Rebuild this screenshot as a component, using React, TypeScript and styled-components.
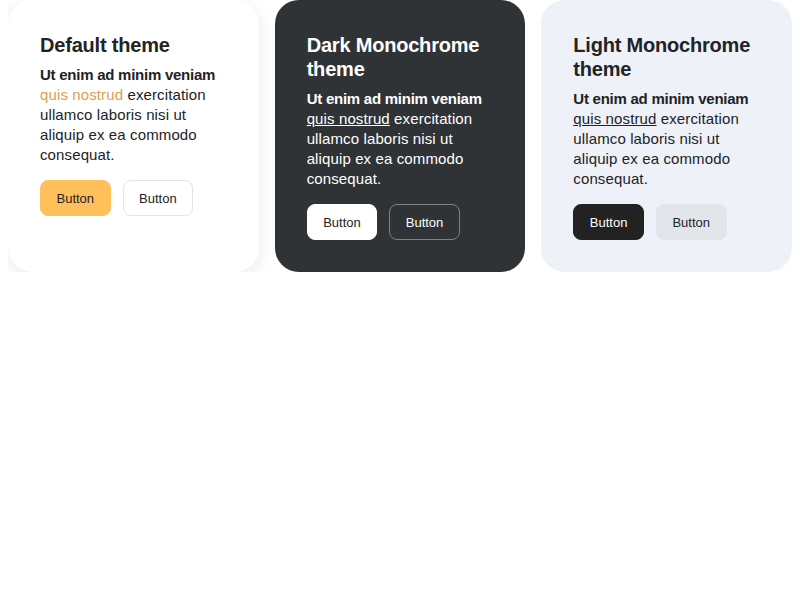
import styled, { createGlobalStyle } from "styled-components";

type Theme = "default" | "dark" | "light";

const palette = {
  default: {
    bg: "#ffffff",
    text: "#222326",
    link: "#dba24e",
    shadow: "0 4px 18px rgba(0, 0, 0, 0.09)",
    primaryBg: "#ffc05c",
    primaryText: "#222326",
    primaryBorder: "#ffc05c",
    secondaryBg: "#ffffff",
    secondaryText: "#222326",
    secondaryBorder: "#e3e4e6",
  },
  dark: {
    bg: "#303336",
    text: "#ffffff",
    link: "#ffffff",
    shadow: "none",
    primaryBg: "#ffffff",
    primaryText: "#222326",
    primaryBorder: "#ffffff",
    secondaryBg: "transparent",
    secondaryText: "#ffffff",
    secondaryBorder: "#7d8084",
  },
  light: {
    bg: "#eef1f8",
    text: "#222326",
    link: "#222326",
    shadow: "none",
    primaryBg: "#222222",
    primaryText: "#ffffff",
    primaryBorder: "#222222",
    secondaryBg: "#e2e5ea",
    secondaryText: "#222326",
    secondaryBorder: "#e2e5ea",
  },
};

const GlobalStyle = createGlobalStyle`
  body {
    margin: 0 8px 8px;
    background: #ffffff;
    font-family: "Liberation Sans", Arial, Helvetica, sans-serif;
  }
`;

const Grid = styled.div`
  display: grid;
  grid-template-columns: repeat(3, 1fr);
  gap: 16px;
`;

const Card = styled.section<{ $theme: Theme }>`
  background: ${(p) => palette[p.$theme].bg};
  color: ${(p) => palette[p.$theme].text};
  box-shadow: ${(p) => palette[p.$theme].shadow};
  border-radius: 24px;
  padding: 33px 32px 32px;
  display: flex;
  flex-direction: column;
  align-items: flex-start;
`;

const Title = styled.h2`
  margin: 0 0 8px;
  font-size: 20px;
  line-height: 24px;
  font-weight: 700;
  letter-spacing: -0.2px;
`;

const Text = styled.p`
  margin: 0 0 15px;
  font-size: 15px;
  line-height: 20px;
  letter-spacing: 0.12px;
  strong {
    font-weight: 700;
    letter-spacing: -0.25px;
  }
`;

const Link = styled.a<{ $theme: Theme }>`
  color: ${(p) => palette[p.$theme].link};
  text-decoration: ${(p) => (p.$theme === "default" ? "none" : "underline")};
`;

const Actions = styled.div`
  display: flex;
  gap: 12px;
`;

const Button = styled.button<{ $theme: Theme; $variant: "primary" | "secondary" }>`
  height: 36px;
  padding: 0 15.5px;
  border-radius: 8px;
  font-family: inherit;
  font-size: 13px;
  cursor: pointer;
  background: ${(p) => palette[p.$theme][`${p.$variant}Bg`]};
  color: ${(p) => palette[p.$theme][`${p.$variant}Text`]};
  border: 1px solid ${(p) => palette[p.$theme][`${p.$variant}Border`]};
`;

const cards: { theme: Theme; title: string }[] = [
  { theme: "default", title: "Default theme" },
  { theme: "dark", title: "Dark Monochrome theme" },
  { theme: "light", title: "Light Monochrome theme" },
];

const App = () => {
  return (
    <>
      <GlobalStyle />
      <Grid>
        {cards.map((c) => (
          <Card key={c.theme} $theme={c.theme}>
            <Title>{c.title}</Title>
            <Text>
              <strong>Ut enim ad minim veniam</strong>{" "}
              <Link $theme={c.theme} href="#">
                quis nostrud
              </Link>{" "}
              exercitation ullamco laboris nisi ut aliquip ex ea commodo consequat.
            </Text>
            <Actions>
              <Button $theme={c.theme} $variant="primary">
                Button
              </Button>
              <Button $theme={c.theme} $variant="secondary">
                Button
              </Button>
            </Actions>
          </Card>
        ))}
      </Grid>
    </>
  );
};

export default App;
